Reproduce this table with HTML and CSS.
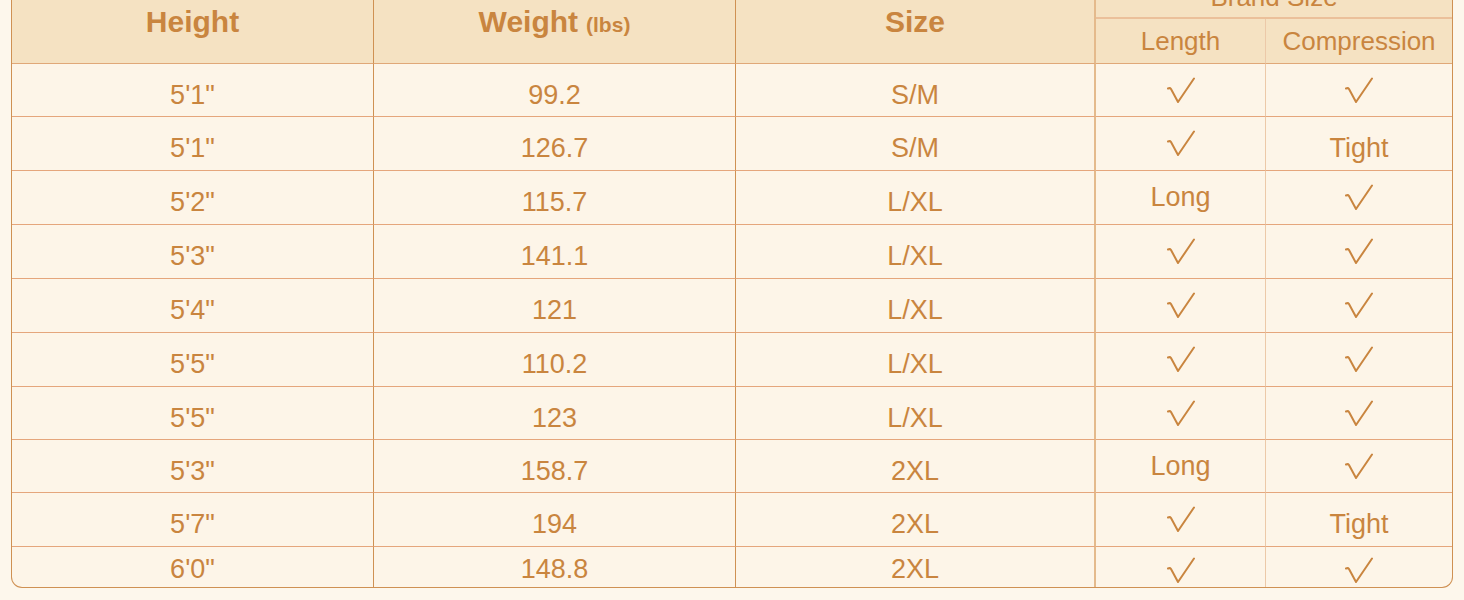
FILE: index.html
```html
<!DOCTYPE html>
<html>
<head>
<meta charset="utf-8">
<link rel="stylesheet" href="styles.css">
</head>
<body>
<svg width="0" height="0" class="defs">
  <symbol id="chk" viewBox="0 0 28 27"><path d="M1 11.5 Q3 10.5 4 12 L11 25 L27 1.5" fill="none" stroke="currentColor" stroke-width="2" stroke-linecap="round" stroke-linejoin="round"/></symbol>
</svg>
<div class="sheet">
  <div class="grid">
    <div class="hd main span2">Height</div>
    <div class="hd main span2">Weight <small>(lbs)</small></div>
    <div class="hd main span2">Size</div>
    <div class="hd top span-cols">Brand Size</div>
    <div class="hd sub c4">Length</div>
    <div class="hd sub c5">Compression</div>

    <div class="c c1">5'1"</div><div class="c c2">99.2</div><div class="c c3">S/M</div><div class="c ck c4"><svg><use href="#chk"/></svg></div><div class="c ck c5"><svg><use href="#chk"/></svg></div>
    <div class="c c1">5'1"</div><div class="c c2">126.7</div><div class="c c3">S/M</div><div class="c ck c4"><svg><use href="#chk"/></svg></div><div class="c c5">Tight</div>
    <div class="c c1">5'2"</div><div class="c c2">115.7</div><div class="c c3">L/XL</div><div class="c c4 up">Long</div><div class="c ck c5"><svg><use href="#chk"/></svg></div>
    <div class="c c1">5'3"</div><div class="c c2">141.1</div><div class="c c3">L/XL</div><div class="c ck c4"><svg><use href="#chk"/></svg></div><div class="c ck c5"><svg><use href="#chk"/></svg></div>
    <div class="c c1">5'4"</div><div class="c c2">121</div><div class="c c3">L/XL</div><div class="c ck c4"><svg><use href="#chk"/></svg></div><div class="c ck c5"><svg><use href="#chk"/></svg></div>
    <div class="c c1">5'5"</div><div class="c c2">110.2</div><div class="c c3">L/XL</div><div class="c ck c4"><svg><use href="#chk"/></svg></div><div class="c ck c5"><svg><use href="#chk"/></svg></div>
    <div class="c c1">5'5"</div><div class="c c2">123</div><div class="c c3">L/XL</div><div class="c ck c4"><svg><use href="#chk"/></svg></div><div class="c ck c5"><svg><use href="#chk"/></svg></div>
    <div class="c c1">5'3"</div><div class="c c2">158.7</div><div class="c c3">2XL</div><div class="c c4 up">Long</div><div class="c ck c5"><svg><use href="#chk"/></svg></div>
    <div class="c c1">5'7"</div><div class="c c2">194</div><div class="c c3">2XL</div><div class="c ck c4"><svg><use href="#chk"/></svg></div><div class="c c5">Tight</div>
    <div class="c c1 last">6'0"</div><div class="c c2 last">148.8</div><div class="c c3 last">2XL</div><div class="c ck c4 last"><svg><use href="#chk"/></svg></div><div class="c ck c5 last"><svg><use href="#chk"/></svg></div>
  </div>
</div>
</body>
</html>
```

FILE: styles.css
```css
html, body {
  margin: 0;
  padding: 0;
  background: #fdf7ec;
  overflow: hidden;
}
.defs { position: absolute; }
.sheet {
  margin: -19px 0 0 11px;
  width: 1442px;
  box-sizing: border-box;
  border: 1px solid #cf9153;
  border-top: none;
  border-radius: 0 0 11px 11px;
  overflow: hidden;
  background: #fdf5e8;
  font-family: "Liberation Sans", Arial, sans-serif;
  color: #c9853f;
}
.grid {
  display: grid;
  grid-template-columns: 362px 362px 360px 170px 186px;
  grid-template-rows: 38px 45px 53px 54px 54px 54px 54px 54px 53px 53px 54px 40px;
}
.grid > div {
  box-sizing: border-box;
  display: flex;
  align-items: baseline;
  justify-content: center;
  border-bottom: 1px solid #e5a67c;
}
.grid > .ck { align-items: center; padding-top: 0; }
.hd { background: #f5e2c2; }
.main {
  font-weight: bold;
  font-size: 30px;
  grid-row: span 2;
  padding-top: 24px;
  border-right: 1px solid #cf9153;
  border-bottom-color: #e0a878 !important;
}
.main:nth-child(3) { border-right: 2px solid #e4ba8c; }
.main small { font-size: 21px; margin-left: 8px; }
.top {
  grid-column: 4 / span 2;
  font-size: 26px;
  padding-top: 1px;
  border-bottom-color: #ebc09a !important;
  border-bottom-width: 2px !important;
}
.sub {
  font-size: 26px;
  padding-top: 7px;
  border-bottom-color: #e0a878 !important;
}
.c { font-size: 27px; padding-top: 16px; }
.c1, .c2 { border-right: 1px solid #cf9153; }
.c3 { border-right: 2px solid #e4ba8c; }
.c4 { border-right: 1px solid #ecc9a8; }
.ck svg { width: 28px; height: 27px; }
.c.up { padding-top: 11px; }
.c.last { padding-top: 7px; }
.last { border-bottom: none !important; }
```
